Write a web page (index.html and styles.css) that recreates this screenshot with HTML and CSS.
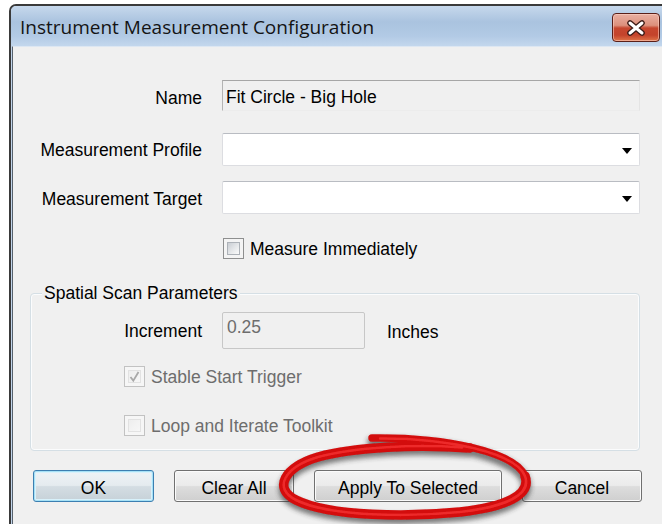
FILE: index.html
```html
<!DOCTYPE html>
<html lang="en">
<head>
<meta charset="utf-8">
<title>Instrument Measurement Configuration</title>
<link rel="stylesheet" href="styles.css">
</head>
<body>
<div class="window">
  <div class="titlebar">
    <span class="title">Instrument Measurement Configuration</span>
    <button class="close" type="button" aria-label="Close">
      <svg width="20" height="16" viewBox="0 0 20 16">
        <path d="M4 3 L16 13 M16 3 L4 13" stroke="#3d1c17" stroke-width="5.6" stroke-linecap="round" fill="none"/>
        <path d="M4 3 L16 13 M16 3 L4 13" stroke="#ffffff" stroke-width="3" stroke-linecap="round" fill="none"/>
      </svg>
    </button>
  </div>
  <div class="frame">
    <div class="client">
      <div class="form">
        <div class="row">
          <span class="lbl lbl-name">Name</span>
          <div class="field readonly">Fit Circle - Big Hole</div>
        </div>
        <div class="row row-profile">
          <span class="lbl">Measurement Profile</span>
          <div class="combo"><span class="arrow"></span></div>
        </div>
        <div class="row row-target">
          <span class="lbl lbl-target">Measurement Target</span>
          <div class="combo"><span class="arrow"></span></div>
        </div>
        <div class="row row-check">
          <span></span>
          <label class="check"><span class="box"></span><span class="txt">Measure Immediately</span></label>
        </div>
      </div>

      <fieldset class="group">
        <legend>Spatial Scan Parameters</legend>
        <div class="inc-row">
          <span class="lbl">Increment</span>
          <div class="field disabled">0.25</div>
          <span class="unit">Inches</span>
        </div>
        <label class="check disabled check-stable">
          <span class="box">
            <svg width="19" height="19" viewBox="0 0 19 19"><path d="M5.5 10 L8.3 13.6 L13.5 5" stroke="#a9a9a9" stroke-width="1.8" fill="none"/></svg>
          </span>
          <span class="txt">Stable Start Trigger</span>
        </label>
        <label class="check disabled check-loop"><span class="box"></span><span class="txt">Loop and Iterate Toolkit</span></label>
      </fieldset>

      <div class="buttons">
        <button class="btn btn-default btn-ok" type="button">OK</button>
        <button class="btn btn-clear" type="button">Clear All</button>
        <button class="btn btn-apply" type="button">Apply To Selected</button>
        <button class="btn btn-cancel" type="button">Cancel</button>
      </div>
    </div>
  </div>
</div>

<!-- hand-drawn red marker ring around the Apply button -->
<svg class="markup" width="662" height="524" viewBox="0 0 662 524" aria-hidden="true">
  <defs>
    <filter id="shade" x="-20%" y="-30%" width="140%" height="160%">
      <feGaussianBlur stdDeviation="2.8"/>
    </filter>
    <filter id="ink" x="-10%" y="-20%" width="120%" height="140%">
      <feGaussianBlur stdDeviation="0.7"/>
    </filter>
  </defs>
  <g filter="url(#shade)" opacity="0.6" transform="translate(0 4)">
    <path class="ring" d="M372 438 C445 437 515 452 525 476 C532 495 505 507 460 512 C410 517 330 517 296 500 C272 488 285 467 318 457 C355 447 415 444 470 448" stroke="#2a2a2a" stroke-width="10"/>
  </g>
  <g filter="url(#ink)">
    <path class="ring" d="M372 438 C445 437 515 452 525 476" stroke="#d30b0b" stroke-width="7.5"/>
    <path class="ring" d="M525 476 C532 495 505 507 460 512 C410 517 330 517 296 500 C272 488 285 467 318 457 C355 447 415 444 470 448" stroke="#d30b0b" stroke-width="9.5"/>
    <path class="ring" d="M380 438.5 C445 438 515 452 525 476 C532 495 505 507 460 512 C410 517 330 517 296 500 C272 488 285 467 318 457 C355 447 415 444 462 447.5" stroke="#ff4040" stroke-width="2.6" opacity="0.6"/>
  </g>
</svg>
</body>
</html>
```

FILE: styles.css
```css
* {
  box-sizing: border-box;
}

html,
body {
  margin: 0;
  height: 100%;
}

body {
  background: #ffffff;
  overflow: hidden;
  font-family: "Liberation Sans", Arial, sans-serif;
  font-size: 17.5px;
  color: #000000;
}

/* ---------- window chrome ---------- */
.window {
  margin: 4px 0 0 9px;
  width: 660px;
  height: 520px;
  border-top: 2px solid #3a3a3a;
  border-left: 2px solid #3a3a3a;
  border-top-left-radius: 7px;
  background: #bcd1e9;
  display: flex;
  flex-direction: column;
  overflow: hidden;
}

.titlebar {
  flex: none;
  height: 40px;
  display: flex;
  align-items: flex-start;
  padding: 0 9px;
  background: linear-gradient(#c6d8ec 0%, #aac3df 40%, #b2cae5 75%, #c3d7ed 100%);
}

.title {
  margin-top: 8px;
  font-family: "Open Sans", "Noto Sans", sans-serif;
  font-size: 19px;
  line-height: 26px;
  color: #141414;
}

.close {
  margin: 7px 0 0 auto;
  width: 48px;
  height: 29px;
  padding: 0;
  border: 1px solid #5a1f18;
  border-radius: 4px;
  background: linear-gradient(#eab0a2 0%, #dc907c 42%, #c6472f 52%, #c4432b 78%, #df7448 100%);
  box-shadow: inset 0 0 0 1px rgba(255, 214, 200, 0.55);
  display: grid;
  place-items: center;
}

.frame {
  flex: 1;
  padding-left: 1px;
  background: #c2d5eb;
}

.client {
  height: 100%;
  border-left: 1px solid #56616d;
  border-top: 1px solid #dde7f2;
  background: #f0f0f0;
}

/* ---------- form ---------- */
.form {
  padding: 33px 0 0 17px;
}

.row {
  display: grid;
  grid-template-columns: 172px 418px;
  column-gap: 20px;
  align-items: center;
}

.row-profile {
  margin-top: 22px;
}

.row-target {
  margin-top: 15px;
}

.row-check {
  margin-top: 23px;
}

.lbl {
  text-align: right;
  line-height: 20px;
}

.lbl-name {
  padding-top: 5px;
}

.lbl-target {
  padding-top: 2px;
}

.field {
  line-height: 20px;
  white-space: nowrap;
}

.field.readonly {
  height: 31px;
  padding: 6px 0 0 3px;
  background: #f0f0f0;
  border: 1px solid;
  border-color: #a6a6a6 #e4e4e4 #ececec #b4b4b4;
}

.combo {
  height: 33px;
  background: #ffffff;
  border: 1px solid #dcdde1;
  border-top-color: #b9bcc2;
  border-radius: 2px;
  display: flex;
  align-items: center;
  justify-content: flex-end;
  padding: 3px 7px 0 0;
}

.arrow {
  width: 0;
  height: 0;
  border-left: 5.5px solid transparent;
  border-right: 5.5px solid transparent;
  border-top: 6px solid #000000;
}

/* ---------- check boxes ---------- */
.check {
  display: flex;
  align-items: center;
  gap: 6px;
  width: fit-content;
}

.row-check .check {
  margin-left: 1px;
}

.check .txt {
  line-height: 20px;
  padding-top: 2px;
}

.box {
  width: 21px;
  height: 21px;
  flex: none;
  border: 1px solid #8e8f8f;
  background: #f4f4f4;
  padding: 3px;
  display: grid;
}

.box::before {
  content: "";
  grid-area: 1 / 1;
  border: 1px solid #adb2b8;
  background: linear-gradient(135deg, #c9cdd3 0%, #e6e8ea 55%, #fbfbfb 100%);
}

.box svg {
  grid-area: 1 / 1;
  margin: -3px;
}

.check.disabled .txt {
  color: #6d6d6d;
}

.check.disabled .box {
  border-color: #c2c2c2;
  background: #f6f6f6;
}

.check.disabled .box::before {
  border-color: #e2e2e2;
  background: linear-gradient(135deg, #eeeeee 0%, #f7f7f7 100%);
}

/* ---------- group box ---------- */
.group {
  margin: 24px 0 0 17px;
  width: 610px;
  padding: 0 0 14px 0;
  border: 1px solid #d5dfe5;
  border-radius: 4px;
  box-shadow: inset 0 0 0 1px #fbfcfd;
}

.group legend {
  margin-left: 11px;
  padding: 0 2px;
  line-height: 20px;
  background: #f0f0f0;
}

.inc-row {
  margin-top: 9px;
  display: grid;
  grid-template-columns: 171px 143px auto;
  column-gap: 20px;
  align-items: center;
}

.field.disabled {
  height: 37px;
  padding: 4px 0 0 4px;
  color: #6d6d6d;
  background: #f0f0f0;
  border: 1px solid #c7c7c7;
  border-radius: 2px;
}

.unit {
  margin-left: 2px;
  line-height: 20px;
  padding-top: 2px;
}

.check-stable {
  margin: 16px 0 0 93px;
}

.check-loop {
  margin: 27px 0 0 93px;
}

/* ---------- buttons ---------- */
.buttons {
  display: flex;
  gap: 20px;
  margin: 19px 0 0 20px;
}

.btn {
  height: 32px;
  padding: 3px 0 0;
  font-family: "Liberation Sans", Arial, sans-serif;
  font-size: 17.5px;
  line-height: 20px;
  color: #000000;
  border: 1px solid #707070;
  border-radius: 3px;
  background: linear-gradient(#f3f3f3 0%, #ebebeb 48%, #dddddd 52%, #cfcfcf 100%);
  box-shadow: inset 0 0 0 1px #fbfbfb;
}

.btn-default {
  border-color: #3c7fb1;
  box-shadow: inset 0 0 0 1px #a6e1f6, inset 0 0 0 2px #d8f1fb;
  background: linear-gradient(#eef3f6 0%, #e5ebef 48%, #d4dde3 52%, #c6d1d8 100%);
}

.btn-ok {
  width: 121px;
}

.btn-clear {
  width: 120px;
}

.btn-apply {
  width: 188px;
}

.btn-cancel {
  width: 120px;
}

/* ---------- marker ring overlay ---------- */
.markup {
  position: absolute;
  left: 0;
  top: 0;
  pointer-events: none;
}

.ring {
  fill: none;
  stroke-linecap: round;
  stroke-linejoin: round;
}
```
